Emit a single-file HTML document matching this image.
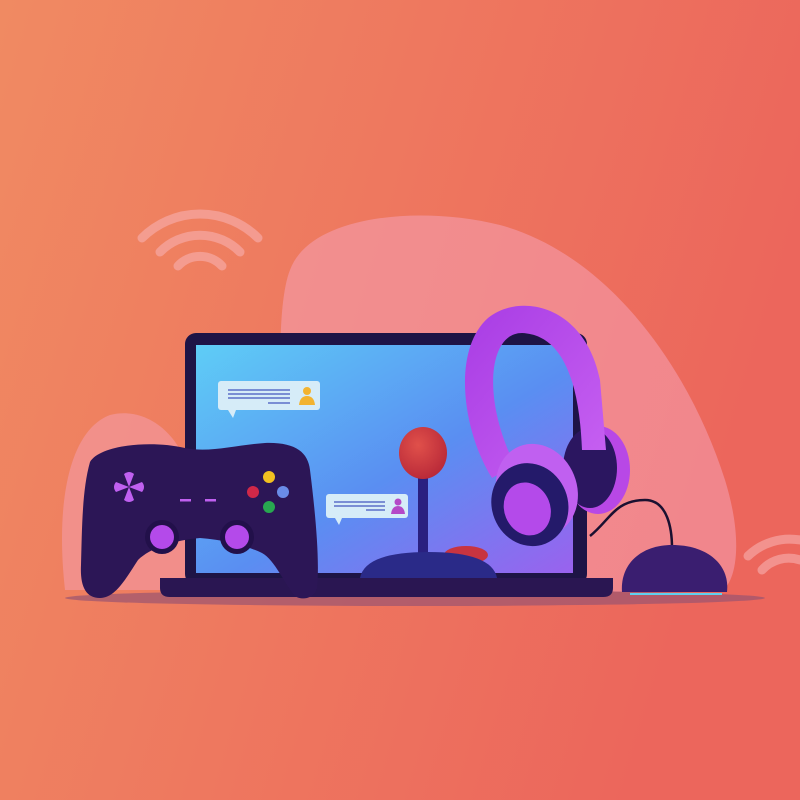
<!DOCTYPE html>
<html><head><meta charset="utf-8"><style>
html,body{margin:0;padding:0;width:800px;height:800px;overflow:hidden}
svg{display:block}
</style></head><body>
<svg width="800" height="800" viewBox="0 0 800 800" xmlns="http://www.w3.org/2000/svg">
<defs>
<linearGradient id="bg" x1="0" y1="0" x2="1" y2="0.3">
<stop offset="0" stop-color="#F08A62"/><stop offset="1" stop-color="#EC665C"/>
</linearGradient>
<linearGradient id="scr" x1="0" y1="0" x2="1" y2="1">
<stop offset="0" stop-color="#5ECDF6"/><stop offset="0.55" stop-color="#5A8EF2"/><stop offset="1" stop-color="#9A62EE"/>
</linearGradient>
<linearGradient id="band" x1="0" y1="0" x2="1" y2="1">
<stop offset="0" stop-color="#A83CE4"/><stop offset="1" stop-color="#C862F2"/>
</linearGradient>
<radialGradient id="ball" cx="0.4" cy="0.35" r="0.7">
<stop offset="0" stop-color="#E0504A"/><stop offset="1" stop-color="#B82838"/>
</radialGradient>
</defs>
<rect width="800" height="800" fill="url(#bg)"/>
<!-- blobs -->
<path d="M290 270 C310 215 420 205 500 225 C610 255 690 370 725 480 C745 545 735 585 720 592 L300 592 C285 500 270 320 290 270 Z" fill="#F6A0B4" opacity="0.55"/>
<path d="M65 590 C55 500 70 430 110 415 C150 405 185 440 190 480 L190 590 Z" fill="#F6A0B4" opacity="0.5"/>
<!-- wifi -->
<g fill="none" stroke="#F8B0B0" stroke-width="9" stroke-linecap="round" opacity="0.6">
<path d="M142 238 A82 82 0 0 1 258 238"/>
<path d="M160 252 A56 56 0 0 1 240 252"/>
<path d="M178 266 A30 30 0 0 1 222 266"/>
<path d="M748 556 A60 60 0 0 1 800 540"/>
<path d="M762 570 A36 36 0 0 1 800 560"/>
</g>
<!-- shadow -->
<ellipse cx="415" cy="598" rx="350" ry="8" fill="#9A5470" opacity="0.7"/>
<!-- laptop -->
<rect x="185" y="333" width="402" height="252" rx="11" fill="#1E1446"/>
<rect x="196" y="345" width="377" height="228" fill="url(#scr)"/>
<path d="M160 578 L613 578 L613 588 Q613 597 603 597 L170 597 Q160 597 160 588 Z" fill="#2A1652"/>
<!-- chat bubbles -->
<rect x="218" y="381" width="102" height="29" rx="3" fill="#D6ECF8"/>
<path d="M228 410 L233 418 L236 410Z" fill="#D6ECF8"/>
<g stroke="#5C6FC8" stroke-width="1.5"><line x1="228" y1="390" x2="290" y2="390"/><line x1="228" y1="394" x2="290" y2="394"/><line x1="228" y1="398" x2="290" y2="398"/><line x1="268" y1="403" x2="290" y2="403"/></g>
<circle cx="307" cy="391" r="4" fill="#F2B330"/><path d="M299 405 Q300 396 307 396 Q314 396 315 405Z" fill="#F2B330"/>
<rect x="326" y="494" width="82" height="24" rx="3" fill="#D6ECF8"/>
<path d="M335 518 L339 525 L342 518Z" fill="#D6ECF8"/>
<g stroke="#5C6FC8" stroke-width="1.4"><line x1="334" y1="502" x2="385" y2="502"/><line x1="334" y1="506" x2="385" y2="506"/><line x1="366" y1="510" x2="385" y2="510"/></g>
<circle cx="398" cy="502" r="3.5" fill="#B448C8"/><path d="M391 514 Q392 506 398 506 Q404 506 405 514Z" fill="#B448C8"/>
<!-- joystick -->
<rect x="418" y="465" width="10" height="95" fill="#2A2080"/>
<ellipse cx="423" cy="453" rx="24" ry="26" fill="url(#ball)"/>
<ellipse cx="466" cy="555" rx="22" ry="9" fill="#C83440"/>
<path d="M360 578 Q365 552 428 552 Q492 552 497 578 Z" fill="#2A2A88"/>
<!-- headphones back cup -->
<ellipse cx="598" cy="470" rx="32" ry="44" fill="#B848E6"/>
<ellipse cx="590" cy="468" rx="27" ry="40" fill="#2B1660"/>
<!-- band -->
<path d="M492 478 C462 430 452 350 488 318 C520 292 585 305 600 380 L606 450 L582 450 C580 400 570 335 522 333 C488 333 482 400 515 465 Z" fill="url(#band)"/>
<!-- cable -->
<path d="M590 536 C610 520 615 500 645 500 C668 500 672 530 672 548" fill="none" stroke="#1A1030" stroke-width="2.5"/>
<!-- mouse -->
<path d="M622 592 C620 565 640 545 672 545 C708 545 730 565 727 592 Z" fill="#3A1E70"/>
<line x1="630" y1="594" x2="722" y2="594" stroke="#5ED0F0" stroke-width="2"/>
<!-- left cup -->
<g transform="rotate(-22 528 500)">
<ellipse cx="540" cy="494" rx="40" ry="47" fill="#C060F0"/>
<ellipse cx="528" cy="505" rx="38" ry="42" fill="#241A6A"/>
<ellipse cx="524" cy="508" rx="23" ry="27" fill="#B44AEA"/>
</g>
<!-- gamepad -->
<path d="M90 462 C100 445 150 440 185 448 C210 453 235 445 265 443 C295 442 308 452 310 470 C315 510 320 560 317 588 C314 600 300 600 295 596 C285 585 275 560 262 553 C245 545 225 540 200 538 C175 540 150 548 138 560 C125 580 115 598 100 598 C85 598 80 585 81 565 C82 530 82 490 90 462 Z" fill="#2C1656"/>
<g fill="#C060F0">
<path d="M129 487 L124 474 Q129 470 134 474 Z"/>
<path d="M129 487 L124 500 Q129 504 134 500 Z"/>
<path d="M129 487 L116 482 Q112 487 116 492 Z"/>
<path d="M129 487 L142 482 Q146 487 142 492 Z"/>
<rect x="180" y="499" width="11" height="2.5"/>
<rect x="205" y="499" width="11" height="2.5"/>
</g>
<circle cx="162" cy="537" r="17" fill="#22104A"/><circle cx="162" cy="537" r="12" fill="#B44AEA"/>
<circle cx="237" cy="537" r="17" fill="#22104A"/><circle cx="237" cy="537" r="12" fill="#B44AEA"/>
<circle cx="269" cy="477" r="6" fill="#F2C020"/>
<circle cx="253" cy="492" r="6" fill="#D02848"/>
<circle cx="283" cy="492" r="6" fill="#6A8CE8"/>
<circle cx="269" cy="507" r="6" fill="#28A850"/>
</svg>
</body></html>
